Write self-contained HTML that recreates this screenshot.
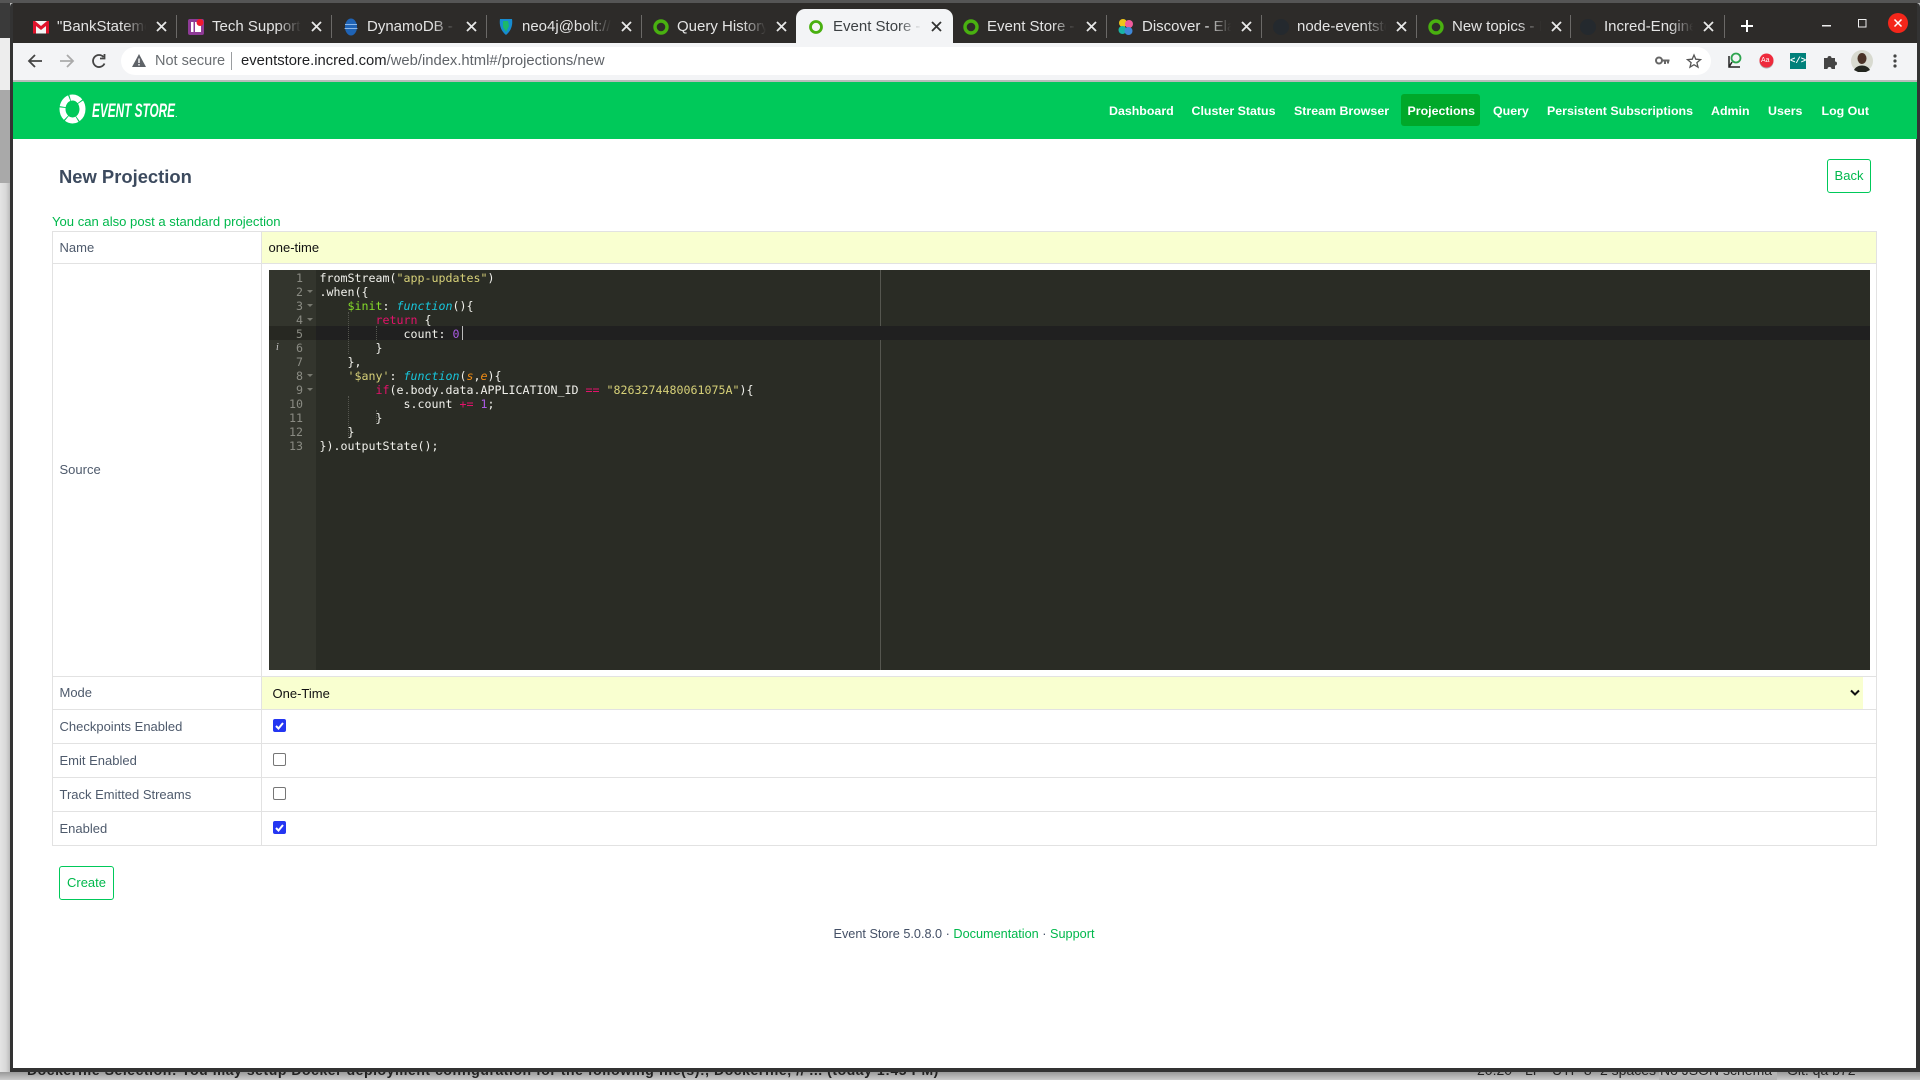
<!DOCTYPE html>
<html lang="en">
<head>
<meta charset="utf-8">
<title>Event Store - New Projection</title>
<style>
html,body{margin:0;padding:0;width:1920px;height:1080px;overflow:hidden;background:#d0d0d0;font-family:"Liberation Sans",sans-serif}
*{box-sizing:border-box}
#desk{position:absolute;left:0;top:0;width:1920px;height:1080px;background:linear-gradient(90deg,#e4e4e4 0,#d8d8d8 6px,#bbb 10px)}
#deskTop{position:absolute;left:0;top:0;width:10px;height:38px;background:#3a3a3a}
#deskMid{position:absolute;left:0;top:38px;width:10px;height:52px;background:#ededed}
#deskGray{position:absolute;left:0;top:90px;width:10px;height:93px;background:#a9a9a9}
#bottomText{position:absolute;left:0;top:1072px;width:1920px;height:8px;overflow:hidden;background:linear-gradient(#999,#ccc)}
#bottomText span{position:absolute;top:-11px;font-size:14px;line-height:18px;color:#222;white-space:nowrap}
#win{position:absolute;left:10px;top:3px;width:1910px;height:1069px;background:#333;border-radius:4px 4px 0 0}
#strip{position:absolute;left:13px;top:3px;width:1904px;height:40px;background:#2d2b29}
#topline{position:absolute;left:0;top:0;width:1920px;height:3px;background:#555}
.tab{position:absolute;top:9px;width:155px;height:34px;color:#e4e4e4;font-size:15px}
.tab.act{background:#f3f4f6;color:#3c4043;border-radius:9px 9px 0 0}
.tab .ic{position:absolute;left:10px;top:9px;width:18px;height:18px}
.tab .t{position:absolute;left:35px;top:8px;width:91px;height:20px;line-height:19px;overflow:hidden;white-space:nowrap;-webkit-mask-image:linear-gradient(90deg,#000 72%,transparent 98%);mask-image:linear-gradient(90deg,#000 72%,transparent 98%)}
.tab .x{position:absolute;left:133px;top:11px;width:13px;height:13px}
.div{position:absolute;top:15px;width:1px;height:23px;background:#6b6967}
#tool{position:absolute;left:13px;top:43px;width:1904px;height:37px;background:#f3f4f6}
#toolline{position:absolute;left:13px;top:80px;width:1904px;height:2px;background:#b9bbba}
#omni{position:absolute;left:121px;top:47px;width:1590px;height:28px;background:#fff;border-radius:14px}
#ns{position:absolute;left:155px;top:51px;font-size:14.5px;line-height:20px;color:#6a6e72;white-space:nowrap}
#nsd{position:absolute;left:231px;top:52px;width:1px;height:18px;background:#9a9da0}
#url{position:absolute;left:241px;top:51px;font-size:14.8px;line-height:20px;color:#5f6368;white-space:nowrap}
#url b{font-weight:normal;color:#202124}
svg{position:absolute;overflow:visible}
#nav{position:absolute;left:13px;top:82px;width:1904px;height:57px;background:#00c95a}
#page{position:absolute;left:13px;top:139px;width:1903px;height:929px;background:#fff}
.n{position:absolute;top:102.500px;font-size:12.400px;line-height:16px;font-weight:bold;color:#fff;white-space:nowrap}
#pbox{position:absolute;left:1401px;top:94px;width:79px;height:32px;background:#00a82a;border-radius:3px}
#h1{position:absolute;left:59px;top:166px;margin:0;font-size:18.4px;line-height:22px;font-weight:bold;color:#3c4a5e;white-space:nowrap}
#post{position:absolute;left:52px;top:213px;font-size:13.080px;line-height:17px;color:#00b84c;white-space:nowrap}
.btn{position:absolute;border:1px solid #00c95a;border-radius:3px;background:#fff;color:#00b84c;font-size:13px;text-align:center;white-space:nowrap}
#tbl{position:absolute;left:52px;top:231px;width:1825px;height:615px;border:1px solid #e2e2e2}
.hl{position:absolute;left:52px;width:1825px;height:1px;background:#e2e2e2}
.vl{position:absolute;left:261px;top:231px;width:1px;height:615px;background:#e2e2e2}
.yl{position:absolute;background:#f9ffd0}
.lab{position:absolute;left:59.5px;font-size:13px;line-height:16px;color:#4e5a6c;white-space:nowrap}
.inp{position:absolute;font-size:13px;line-height:16px;color:#111;white-space:nowrap}
.cb{position:absolute;left:273px;width:13px;height:13px;border-radius:2px}
.cb.off{border:1px solid #767676;background:#fff}
.cb.on{background:#2436f2}
#ed{position:absolute;left:269px;top:270px;width:1601px;height:400px;background:#2a2c25;overflow:hidden}
#gut{position:absolute;left:0;top:0;width:47px;height:400px;background:#33352d}
#aline{position:absolute;left:47px;top:56px;width:1554px;height:14px;background:#202020}
#agut{position:absolute;left:0;top:56px;width:47px;height:14px;background:#272822}
#pm{position:absolute;left:611px;top:0;width:1px;height:400px;background:#55564f}
#pm2{position:absolute;left:611px;top:56px;width:1px;height:14px;background:#202020}
.ln{position:absolute;left:0;width:34px;height:14px;margin-top:1px;text-align:right;font:11.63px/14px "DejaVu Sans Mono",monospace;color:#8a8b83}
.fd{position:absolute;left:38px;width:0;height:0;border-left:3px solid transparent;border-right:3px solid transparent;border-top:3px solid #77786f}
.cl{position:absolute;left:50.500px;height:14px;margin-top:1px;font:11.63px/14px "DejaVu Sans Mono",monospace;color:#f1f1ec;white-space:pre}
.s{color:#d6d078}.k{color:#e3126a}.f{color:#17c6dc;font-style:italic}.g{color:#86dc2a}.m{color:#ab5be6}.p{color:#f08c15;font-style:italic}
.ig{position:absolute;width:0;border-left:1px dotted #55564f}
#foot{position:absolute;left:833.5px;top:926px;font-size:12.700px;line-height:16px;color:#445066;white-space:nowrap}
#foot a{color:#00b84c;text-decoration:none}
</style>
</head>
<body>
<div id="desk"></div><div id="deskTop"></div><div id="deskMid"></div><div id="deskGray"></div>
<div id="bottomText">
<span style="left:1659px;top:0;width:118px;height:8px;background:#b5b5b5"></span>
<span style="left:27px;font-weight:bold;letter-spacing:.55px">Dockerfile Selection: You may setup Docker deployment configuration for the following file(s):, Dockerfile, // ... (today 1:45 PM)</span>
<span style="left:1477px">20:20</span><span style="left:1525px">LF</span><span style="left:1552px">UTF-8</span><span style="left:1600px">2 spaces</span><span style="left:1660px">No JSON schema</span><span style="left:1787px">Git: qa b72</span>
</div>
<div id="topline"></div>
<div id="win"></div>
<div id="strip"></div>
<div id="tool"></div>
<div id="toolline"></div>

<!-- Tabs -->
<div class="tab" style="left:22px"><svg class="ic" viewBox="0 0 18 18"><rect x="1" y="3" width="16" height="12.5" fill="#f4f4f4"/><path d="M1 15.5V3h2l6 5 6-5h2v12.500h-3V8l-5 4-5-4v7.500z" fill="#e0132b"/></svg><span class="t">"BankStatement</span><svg class="x" viewBox="0 0 13 13"><path d="M2 2l9 9M11 2l-9 9" stroke="#e8e8e8" stroke-width="1.800"/></svg></div>
<div class="div" style="left:176px"></div>
<div class="tab" style="left:177px"><svg class="ic" viewBox="0 0 18 18"><rect x="1" y="1" width="16" height="16" rx="2" fill="#8e3a96"/><rect x="4" y="4" width="2.500" height="10" fill="#fff"/><rect x="8" y="4" width="6" height="10" fill="#fff"/><circle cx="13" cy="4.500" r="3.500" fill="#f0192e"/></svg><span class="t">Tech Support</span><svg class="x" viewBox="0 0 13 13"><path d="M2 2l9 9M11 2l-9 9" stroke="#e8e8e8" stroke-width="1.800"/></svg></div>
<div class="div" style="left:331px"></div>
<div class="tab" style="left:332px"><svg class="ic" viewBox="0 0 18 18"><ellipse cx="9" cy="9" rx="6" ry="8.500" fill="#1f63b5"/><path d="M3 6.500h12M2.600 10.500h12.800" stroke="#8cb7e8" stroke-width="1"/></svg><span class="t">DynamoDB - AWS</span><svg class="x" viewBox="0 0 13 13"><path d="M2 2l9 9M11 2l-9 9" stroke="#e8e8e8" stroke-width="1.800"/></svg></div>
<div class="div" style="left:486px"></div>
<div class="tab" style="left:487px"><svg class="ic" viewBox="0 0 18 18"><path d="M3 1h12c1 6-1 12-6 16C4 13 2 7 3 1z" fill="#178bd0"/><path d="M6 3h5l1 5-3 6-3-5z" fill="#1cb86a"/></svg><span class="t">neo4j@bolt://</span><svg class="x" viewBox="0 0 13 13"><path d="M2 2l9 9M11 2l-9 9" stroke="#e8e8e8" stroke-width="1.800"/></svg></div>
<div class="div" style="left:641px"></div>
<div class="tab" style="left:642px"><svg class="ic" viewBox="0 0 18 18"><circle cx="9" cy="9" r="6" fill="none" stroke="#49b010" stroke-width="3.400"/></svg><span class="t">Query History</span><svg class="x" viewBox="0 0 13 13"><path d="M2 2l9 9M11 2l-9 9" stroke="#e8e8e8" stroke-width="1.800"/></svg></div>
<div class="tab act" style="left:796px;width:157px"><svg class="ic" viewBox="0 0 18 18" style="left:11px"><circle cx="9" cy="9" r="5.500" fill="none" stroke="#49b010" stroke-width="2.800"/></svg><span class="t" style="left:37px">Event Store - New</span><svg class="x" viewBox="0 0 13 13" style="left:134px"><path d="M2 2l9 9M11 2l-9 9" stroke="#333" stroke-width="1.800"/></svg></div>
<div class="tab" style="left:952px"><svg class="ic" viewBox="0 0 18 18"><circle cx="9" cy="9" r="6" fill="none" stroke="#49b010" stroke-width="3.400"/></svg><span class="t">Event Store - New</span><svg class="x" viewBox="0 0 13 13"><path d="M2 2l9 9M11 2l-9 9" stroke="#e8e8e8" stroke-width="1.800"/></svg></div>
<div class="div" style="left:1106px"></div>
<div class="tab" style="left:1107px"><svg class="ic" viewBox="0 0 18 18"><circle cx="6" cy="5" r="4" fill="#f0c419"/><circle cx="12" cy="6" r="4" fill="#ef5b9c"/><circle cx="5.500" cy="12" r="4" fill="#19b4a5"/><circle cx="11.500" cy="13" r="4" fill="#3f88d8"/></svg><span class="t">Discover - Elastic</span><svg class="x" viewBox="0 0 13 13"><path d="M2 2l9 9M11 2l-9 9" stroke="#e8e8e8" stroke-width="1.800"/></svg></div>
<div class="div" style="left:1261px"></div>
<div class="tab" style="left:1262px"><svg class="ic" viewBox="0 0 18 18"><circle cx="9" cy="9" r="8" fill="#24292e"/></svg><span class="t">node-eventstore</span><svg class="x" viewBox="0 0 13 13"><path d="M2 2l9 9M11 2l-9 9" stroke="#e8e8e8" stroke-width="1.800"/></svg></div>
<div class="div" style="left:1416px"></div>
<div class="tab" style="left:1417px"><svg class="ic" viewBox="0 0 18 18"><circle cx="9" cy="9" r="6" fill="none" stroke="#49b010" stroke-width="3.400"/></svg><span class="t">New topics - Kafka</span><svg class="x" viewBox="0 0 13 13"><path d="M2 2l9 9M11 2l-9 9" stroke="#e8e8e8" stroke-width="1.800"/></svg></div>
<div class="div" style="left:1570px"></div>
<div class="tab" style="left:1569px"><svg class="ic" viewBox="0 0 18 18"><circle cx="9" cy="9" r="8" fill="#24292e"/></svg><span class="t">Incred-Engine</span><svg class="x" viewBox="0 0 13 13"><path d="M2 2l9 9M11 2l-9 9" stroke="#e8e8e8" stroke-width="1.800"/></svg></div>
<div class="div" style="left:1724px"></div>

<!-- New tab + window controls -->
<svg style="left:1740px;top:19px" width="14" height="14" viewBox="0 0 14 14"><path d="M7 1v12M1 7h12" stroke="#fff" stroke-width="2"/></svg>
<svg style="left:1822px;top:25px" width="9" height="2"><rect width="9" height="1.500" fill="#eee"/></svg>
<svg style="left:1858px;top:19px" width="9" height="9"><rect x=".5" y=".5" width="7.500" height="7.500" fill="none" stroke="#eee"/></svg>
<svg style="left:1888px;top:13px" width="20" height="20" viewBox="0 0 20 20"><circle cx="10" cy="10" r="10" fill="#f5261a"/><path d="M6.500 6.500l7 7M13.500 6.500l-7 7" stroke="#fff" stroke-width="1.500"/></svg>

<!-- Toolbar -->
<div id="omni"></div>
<svg style="left:27px;top:53px" width="16" height="16" viewBox="0 0 16 16"><path d="M15 8H2M8 2L2 8l6 6" fill="none" stroke="#444" stroke-width="1.800"/></svg>
<svg style="left:59px;top:53px" width="16" height="16" viewBox="0 0 16 16"><path d="M1 8h13M8 2l6 6-6 6" fill="none" stroke="#aaa" stroke-width="1.800"/></svg>
<svg style="left:91px;top:53px" width="16" height="16" viewBox="0 0 16 16"><path d="M13.500 10.500A6 6 0 1 1 12.500 4M13.500 1v4.500H9" fill="none" stroke="#444" stroke-width="1.800"/></svg>
<svg style="left:132px;top:54px" width="14" height="13" viewBox="0 0 14 13"><path d="M7 0l7 13H0z" fill="#5f6368"/><rect x="6.300" y="4.500" width="1.400" height="4.500" fill="#fff"/><rect x="6.300" y="10" width="1.400" height="1.500" fill="#fff"/></svg>
<div id="ns">Not secure</div><div id="nsd"></div>
<div id="url"><b>eventstore.incred.com</b>/web/index.html#/projections/new</div>
<svg style="left:1655px;top:56px" width="15" height="10" viewBox="0 0 15 10"><circle cx="4" cy="4.500" r="3" fill="none" stroke="#666" stroke-width="2"/><path d="M7 4.500h7.500M10 4.500v3.500M13 4.500v3" stroke="#666" stroke-width="2"/></svg>
<svg style="left:1687px;top:54px" width="14" height="14" viewBox="0 0 14 14"><path d="M7 1l1.800 4.200 4.700.4-3.600 3 1.100 4.500L7 10.700l-4 2.400 1.100-4.500-3.600-3 4.700-.4z" fill="none" stroke="#555" stroke-width="1.300"/></svg>
<svg style="left:1726px;top:52px" width="17" height="18" viewBox="0 0 17 18"><circle cx="10" cy="6" r="4.500" fill="none" stroke="#2ea44f" stroke-width="1.800"/><path d="M3 4v11h11M6 10l-3 5" fill="none" stroke="#222" stroke-width="1.500"/></svg>
<svg style="left:1759px;top:53px" width="15" height="16" viewBox="0 0 15 16"><circle cx="7.500" cy="8.500" r="7" fill="#666" opacity=".5"/><circle cx="7.500" cy="7.500" r="7" fill="#ee2a3c"/></svg>
<div style="position:absolute;left:1761px;top:56px;font-size:7px;line-height:9px;color:#fff">Aa</div>
<div style="position:absolute;left:1790px;top:53px;width:16px;height:16px;background:#00807a;color:#fff;font:bold 9px/16px 'Liberation Mono',monospace;text-align:center">&lt;/&gt;</div>
<svg style="left:1823px;top:54px" width="15" height="15" viewBox="0 0 15 15"><path d="M1 4h3.500a2 2 0 1 1 4 0H12v3.500a2 2 0 1 1 0 4V15H8.500a2 2 0 1 0-4 0H1z" fill="#444"/></svg>
<svg style="left:1851px;top:50px" width="22" height="22" viewBox="0 0 22 22"><circle cx="11" cy="11" r="11" fill="#d8dad0"/><ellipse cx="11" cy="8.500" rx="4.500" ry="5.500" fill="#4a3226"/><path d="M3 20c3-6 13-6 16 0l-4 2H7z" fill="#23261f"/></svg>
<svg style="left:1893px;top:54px" width="4" height="14"><circle cx="2" cy="2" r="1.600" fill="#444"/><circle cx="2" cy="7" r="1.600" fill="#444"/><circle cx="2" cy="12" r="1.600" fill="#444"/></svg>

<!-- Nav -->
<div id="nav"></div>
<svg style="left:59px;top:94px" width="28" height="30" viewBox="0 0 28 30"><ellipse cx="13.500" cy="15" rx="10" ry="11.500" fill="none" stroke="#fff" stroke-width="6" stroke-dasharray="11 1"/></svg>
<svg style="left:90px;top:100px" width="90" height="20"><text x="2" y="17" font-family="Liberation Sans" font-weight="bold" font-style="italic" font-size="19" fill="#fff" textLength="83" lengthAdjust="spacingAndGlyphs">EVENT STORE</text><text x="85" y="17" font-family="Liberation Sans" font-size="9" fill="#fff">.</text></svg>
<div id="pbox"></div>
<span class="n" style="left:1109px">Dashboard</span>
<span class="n" style="left:1191.500px">Cluster Status</span>
<span class="n" style="left:1294px">Stream Browser</span>
<span class="n" style="left:1407.500px">Projections</span>
<span class="n" style="left:1493px">Query</span>
<span class="n" style="left:1547px">Persistent Subscriptions</span>
<span class="n" style="left:1711px">Admin</span>
<span class="n" style="left:1768px">Users</span>
<span class="n" style="left:1821.500px">Log Out</span>

<!-- Page -->
<div id="page"></div>
<h1 id="h1">New Projection</h1>
<div class="btn" style="left:1827px;top:159px;width:44px;height:34px;line-height:32px">Back</div>
<div id="post">You can also post a standard projection</div>

<div id="tbl"></div>
<div class="yl" style="left:262px;top:232px;width:1614px;height:31px"></div>
<div class="yl" style="left:262px;top:677px;width:1601px;height:32px"></div>
<div class="hl" style="top:263px"></div>
<div class="hl" style="top:676px"></div>
<div class="hl" style="top:709px"></div>
<div class="hl" style="top:743px"></div>
<div class="hl" style="top:777px"></div>
<div class="hl" style="top:811px"></div>
<div class="vl"></div>

<div class="lab" style="top:240px">Name</div>
<div class="lab" style="top:462px">Source</div>
<div class="lab" style="top:685px">Mode</div>
<div class="lab" style="top:719px">Checkpoints Enabled</div>
<div class="lab" style="top:753px">Emit Enabled</div>
<div class="lab" style="top:787px">Track Emitted Streams</div>
<div class="lab" style="top:821px">Enabled</div>

<div class="inp" style="left:268.500px;top:240px">one-time</div>
<div class="inp" style="left:272.500px;top:686px">One-Time</div>
<svg style="left:1850px;top:689px" width="10" height="8" viewBox="0 0 10 8"><path d="M1 1.500l4 4 4-4" fill="none" stroke="#111" stroke-width="2"/></svg>

<div class="cb on" style="top:719px"><svg width="13" height="13" viewBox="0 0 13 13"><path d="M3 7l2.500 2.500L10 4" fill="none" stroke="#fff" stroke-width="2"/></svg></div>
<div class="cb off" style="top:753px"></div>
<div class="cb off" style="top:787px"></div>
<div class="cb on" style="top:821px"><svg width="13" height="13" viewBox="0 0 13 13"><path d="M3 7l2.500 2.500L10 4" fill="none" stroke="#fff" stroke-width="2"/></svg></div>

<!-- Editor -->
<div id="ed">
<div id="gut"></div><div id="agut"></div><div id="pm"></div><div id="aline"></div><div id="pm2"></div>
<div class="ig" style="left:79px;top:42px;height:42px"></div>
<div class="ig" style="left:79px;top:126px;height:42px"></div>
<div class="ig" style="left:107px;top:56px;height:14px"></div>
<div class="ig" style="left:107px;top:140px;height:14px"></div>
<div class="ln" style="top:0">1</div><div class="ln" style="top:14px">2</div><div class="ln" style="top:28px">3</div><div class="ln" style="top:42px">4</div><div class="ln" style="top:56px">5</div><div class="ln" style="top:70px">6</div><div class="ln" style="top:84px">7</div><div class="ln" style="top:98px">8</div><div class="ln" style="top:112px">9</div><div class="ln" style="top:126px">10</div><div class="ln" style="top:140px">11</div><div class="ln" style="top:154px">12</div><div class="ln" style="top:168px">13</div>
<div class="fd" style="top:20px"></div><div class="fd" style="top:34px"></div><div class="fd" style="top:48px"></div><div class="fd" style="top:104px"></div><div class="fd" style="top:118px"></div>
<div style="position:absolute;left:7px;top:71px;font:italic 10px/14px 'Liberation Serif',serif;color:#ccc">i</div>
<div class="cl" style="top:0">fromStream(<span class="s">"app-updates"</span>)</div>
<div class="cl" style="top:14px">.when({</div>
<div class="cl" style="top:28px">    <span class="g">$init</span>: <span class="f">function</span>(){</div>
<div class="cl" style="top:42px">        <span class="k">return</span> {</div>
<div class="cl" style="top:56px">            count: <span class="m">0</span></div>
<div style="position:absolute;left:192.500px;top:56px;width:1px;height:14px;background:#bbb"></div>
<div class="cl" style="top:70px">        }</div>
<div class="cl" style="top:84px">    },</div>
<div class="cl" style="top:98px">    <span class="s">'$any'</span>: <span class="f">function</span>(<span class="p">s</span>,<span class="p">e</span>){</div>
<div class="cl" style="top:112px">        <span class="k">if</span>(e.body.data.APPLICATION_ID <span class="k">==</span> <span class="s">"8263274480061075A"</span>){</div>
<div class="cl" style="top:126px">            s.count <span class="k">+=</span> <span class="m">1</span>;</div>
<div class="cl" style="top:140px">        }</div>
<div class="cl" style="top:154px">    }</div>
<div class="cl" style="top:168px">}).outputState();</div>
</div>

<div class="btn" style="left:59px;top:866px;width:55px;height:34px;line-height:32px">Create</div>

<div id="foot">Event Store 5.0.8.0 · <a>Documentation</a> · <a>Support</a></div>
</body>
</html>
